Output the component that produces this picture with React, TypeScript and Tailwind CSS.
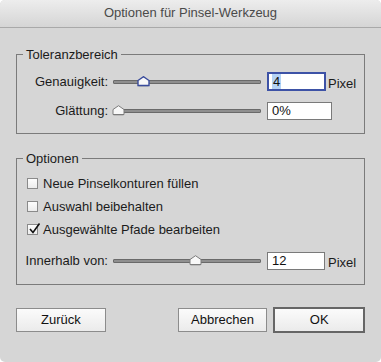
import React from 'react'

const font = { fontFamily: '"Liberation Sans", Arial, sans-serif' }

const Thumb: React.FC<{ focused?: boolean }> = ({ focused }) => (
  <svg width="13" height="11" viewBox="0 0 13 11" className="block">
    <path d="M1.5 5.5 L6.5 1 L11.5 5.5 L11.5 10.5 L1.5 10.5 Z" fill="#8a8a8a" opacity="0.35" transform="translate(0 0.8)" />
    <path
      d="M1 4.5 L6.5 0.7 L12 4.5 L12 9.5 L1 9.5 Z"
      fill="#f8f8f8"
      stroke={focused ? '#3a4c9c' : '#7c7c7c'}
      strokeWidth={focused ? 1.4 : 1}
    />
  </svg>
)

const Slider: React.FC<{ pos: number; focused?: boolean }> = ({ pos, focused }) => (
  <div className="relative w-[148px] h-[4px] bg-[#8f8f8f] border border-[#6a6a6a] rounded-[1px]">
    <div className="absolute top-[-5px]" style={{ left: pos }}>
      <Thumb focused={focused} />
    </div>
  </div>
)

const Checkbox: React.FC<{ checked?: boolean; label: string }> = ({ checked, label }) => (
  <div className="flex items-center h-[15px] pl-[10px]">
    <div className="relative w-[11px] h-[11px] border border-[#8a8a8a] bg-gradient-to-b from-[#fdfdfd] to-[#ececec]">
      {checked && (
        <svg width="13" height="13" viewBox="0 0 13 13" className="absolute left-[0px] top-[-3px]">
          <path d="M2 7 L5 10.5 L11.5 1.5" fill="none" stroke="#111" strokeWidth="1.6" />
        </svg>
      )}
    </div>
    <span className="ml-[5px] text-[13px] text-[#1b1b1b]">{label}</span>
  </div>
)

const Button: React.FC<{ label: string; primary?: boolean; className?: string }> = ({ label, primary, className }) => (
  <button
    className={
      'flex items-center justify-center text-[13px] text-[#111] bg-gradient-to-b from-[#fbfbfb] to-[#ebebeb] ' +
      (primary ? 'h-[26px] border-2 border-[#666]' : 'h-[24px] border border-[#8c8c8c]') +
      ' ' +
      (className ?? '')
    }
  >
    {label}
  </button>
)

export default function App() {
  return (
    <div className="w-[381px] h-[362px] bg-white" style={font}>
      <div className="w-[381px] h-[362px] bg-[#d6d6d6] rounded-[5px] overflow-hidden flex flex-col">
        {/* Title bar */}
        <div className="h-[28px] flex items-center justify-center bg-gradient-to-b from-[#ededed] to-[#d5d5d5] border-b border-[#a9a9a9]">
          <span className="text-[13px] text-[#4a4a4a] -mt-[2px]">Optionen für Pinsel-Werkzeug</span>
        </div>

        {/* Toleranzbereich */}
        <fieldset className="mx-[16px] mt-[19px] w-[349px] border border-[#7b7b7b] pt-[10px] pb-[13px]">
          <legend className="ml-[6px] px-[3px] text-[13px] leading-[15px] text-[#1b1b1b]">Toleranzbereich</legend>
          <div className="flex items-center h-[19px]">
            <span className="w-[91px] text-right text-[13px] text-[#1b1b1b]">Genauigkeit:</span>
            <div className="ml-[5px]">
              <Slider pos={23} focused />
            </div>
            <div className="ml-[6px] w-[59px] h-[19px] border-2 border-[#3d52a6] bg-white flex items-center pl-[3px]">
              <span className="text-[13px] leading-[15px] text-[#111] bg-[#b4d3f5] px-[1px]">4</span>
            </div>
            <span className="ml-[2px] mt-[4px] text-[13px] text-[#1b1b1b]">Pixel</span>
          </div>
          <div className="flex items-center h-[18px] mt-[11px]">
            <span className="w-[91px] text-right text-[13px] text-[#1b1b1b]">Glättung:</span>
            <div className="ml-[5px]">
              <Slider pos={-2} />
            </div>
            <div className="ml-[6px] w-[65px] h-[18px] border border-[#7a7a7a] bg-white flex items-center pl-[4px]">
              <span className="text-[13px] text-[#111]">0%</span>
            </div>
          </div>
        </fieldset>

        {/* Optionen */}
        <fieldset className="mx-[16px] mt-[17px] w-[349px] border border-[#7b7b7b] pt-[10px] pb-[14px]">
          <legend className="ml-[6px] px-[3px] text-[13px] leading-[15px] text-[#1b1b1b]">Optionen</legend>
          <Checkbox label="Neue Pinselkonturen füllen" />
          <div className="mt-[8px]">
            <Checkbox label="Auswahl beibehalten" />
          </div>
          <div className="mt-[8px]">
            <Checkbox checked label="Ausgewählte Pfade bearbeiten" />
          </div>
          <div className="flex items-center h-[18px] mt-[15px]">
            <span className="w-[91px] text-right text-[13px] text-[#1b1b1b]">Innerhalb von:</span>
            <div className="ml-[5px]">
              <Slider pos={75} />
            </div>
            <div className="ml-[6px] w-[58px] h-[18px] border border-[#7a7a7a] bg-white flex items-center pl-[4px]">
              <span className="text-[13px] text-[#111]">12</span>
            </div>
            <span className="ml-[3px] mt-[4px] text-[13px] text-[#1b1b1b]">Pixel</span>
          </div>
        </fieldset>

        {/* Buttons */}
        <div className="flex items-center mt-[22px] px-[16px]">
          <Button label="Zurück" className="w-[90px]" />
          <Button label="Abbrechen" className="w-[90px] ml-[72px]" />
          <Button label="OK" primary className="w-[92px] ml-[6px]" />
        </div>
      </div>
    </div>
  )
}
